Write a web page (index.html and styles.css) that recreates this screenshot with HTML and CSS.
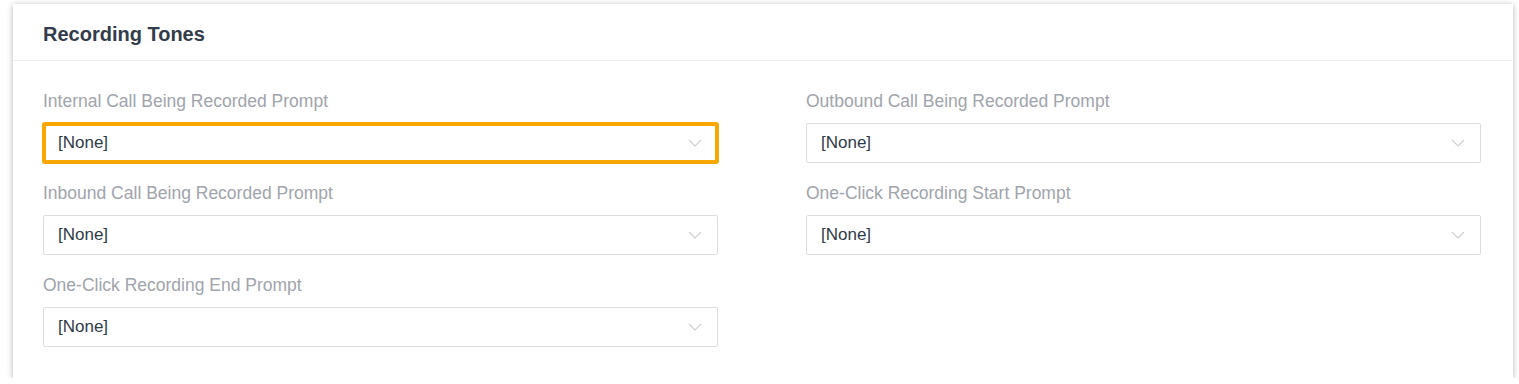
FILE: index.html
```html
<!DOCTYPE html>
<html>
<head>
<meta charset="utf-8">
<link rel="stylesheet" href="styles.css">
</head>
<body>
<div class="card">
  <div class="card-header">Recording Tones</div>
  <div class="card-body">
    <div class="grid">
      <div class="item">
        <div class="label">Internal Call Being Recorded Prompt</div>
        <div class="select highlight"><span>[None]</span><svg class="chev" viewBox="0 0 14 8" width="14" height="8"><path d="M1 1 L7 7 L13 1" fill="none" stroke="#cfcfcf" stroke-width="1.2"/></svg></div>
      </div>
      <div class="item">
        <div class="label">Outbound Call Being Recorded Prompt</div>
        <div class="select"><span>[None]</span><svg class="chev" viewBox="0 0 14 8" width="14" height="8"><path d="M1 1 L7 7 L13 1" fill="none" stroke="#cfcfcf" stroke-width="1.2"/></svg></div>
      </div>
      <div class="item">
        <div class="label">Inbound Call Being Recorded Prompt</div>
        <div class="select"><span>[None]</span><svg class="chev" viewBox="0 0 14 8" width="14" height="8"><path d="M1 1 L7 7 L13 1" fill="none" stroke="#cfcfcf" stroke-width="1.2"/></svg></div>
      </div>
      <div class="item">
        <div class="label">One-Click Recording Start Prompt</div>
        <div class="select"><span>[None]</span><svg class="chev" viewBox="0 0 14 8" width="14" height="8"><path d="M1 1 L7 7 L13 1" fill="none" stroke="#cfcfcf" stroke-width="1.2"/></svg></div>
      </div>
      <div class="item">
        <div class="label">One-Click Recording End Prompt</div>
        <div class="select"><span>[None]</span><svg class="chev" viewBox="0 0 14 8" width="14" height="8"><path d="M1 1 L7 7 L13 1" fill="none" stroke="#cfcfcf" stroke-width="1.2"/></svg></div>
      </div>
    </div>
  </div>
</div>
</body>
</html>
```
FILE: styles.css
```css
* { box-sizing: border-box; }
body {
  margin: 0;
  background: #ffffff;
  font-family: "Liberation Sans", Arial, sans-serif;
}
.card {
  margin: 4px 6px 0 13px;
  width: 1500px;
  height: 374px;
  background: #fff;
  box-shadow: 0 1px 6px rgba(0,0,0,0.3);
}
.card-header {
  height: 57px;
  padding: 4px 30px 0;
  display: flex;
  align-items: center;
  font-size: 20px;
  font-weight: bold;
  color: #333c4a;
  border-bottom: 1px solid #eceef0;
}
.card-body {
  padding: 28px 32px 0 30px;
}
.grid {
  display: grid;
  grid-template-columns: 675px 675px;
  column-gap: 88px;
  row-gap: 18px;
}
.label {
  font-size: 17.5px;
  line-height: 24px;
  color: #a0a4ab;
  margin-bottom: 10px;
}
.select {
  height: 40px;
  border: 1px solid #dcdde0;
  border-radius: 2px;
  display: flex;
  align-items: center;
  justify-content: space-between;
  padding: 0 14px 0 14px;
  font-size: 17px;
  color: #2f3a48;
}
.select.highlight {
  outline: 4px solid #f6a800;
  outline-offset: -3px;
}
.chev { display: block; margin-right: 1px; }
```
